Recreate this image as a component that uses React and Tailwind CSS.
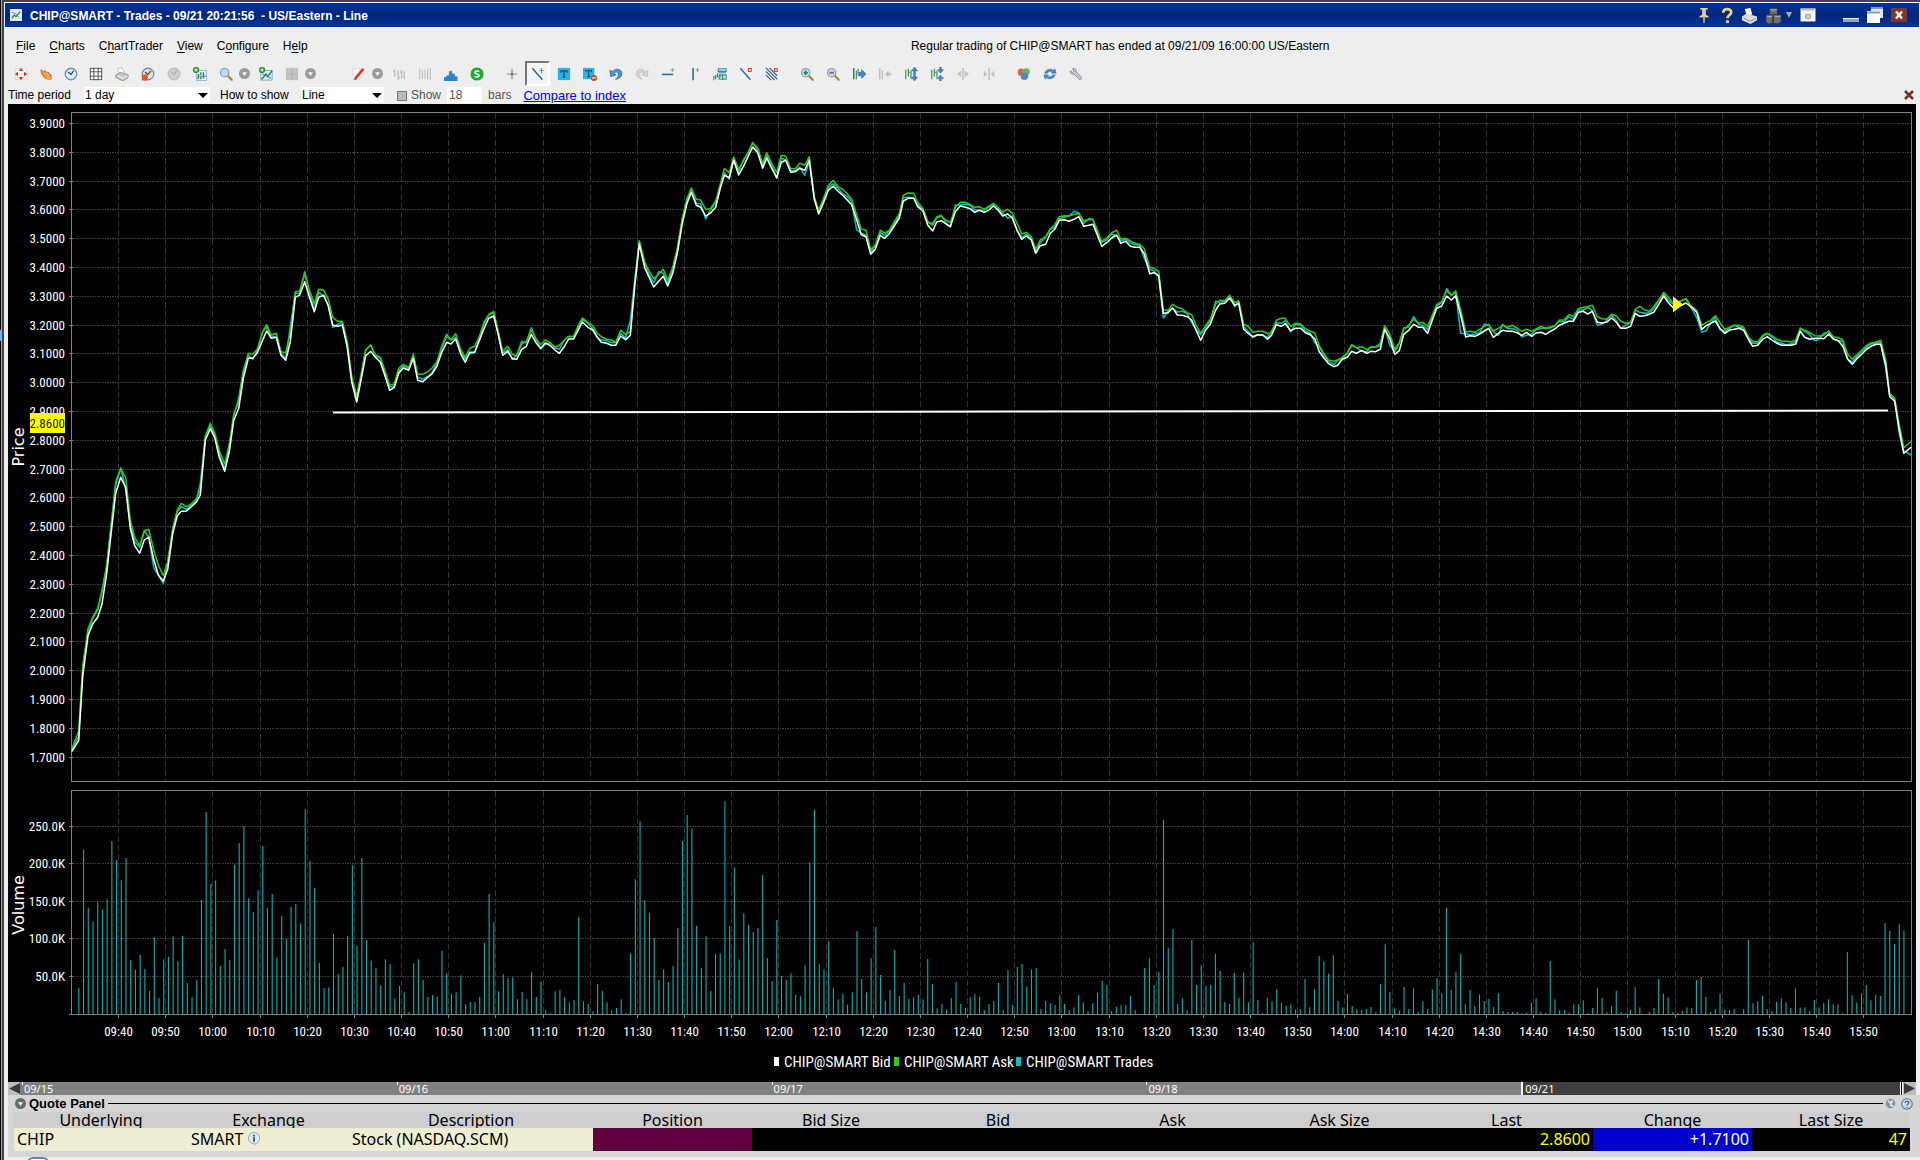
import { useState } from "react";

// price lines, one block per stretch of the session
// rows are: x, bid, ask, trades in thirds of a chart unit from (x0, y0)
const TRACES = [
  {
    x0: 0,
    y0: 400,
    rows: [
      [215, 1055, 1048, 1050], [236, 1022, 993, 1010], [248, 830, 800, 800], [264, 707, 686, 700],
      [278, 672, 652, 655], [293, 652, 625, 630], [306, 612, 575, 572], [320, 520, 495, 500],
      [334, 395, 375, 370], [347, 280, 255, 245], [362, 232, 206, 203], [377, 262, 232, 270],
      [391, 385, 360, 375], [404, 437, 412, 425], [419, 460, 437, 442], [433, 420, 392, 392],
      [446, 411, 388, 410], [461, 478, 450, 503], [475, 525, 495, 525], [490, 543, 527, 550],
      [503, 508, 485, 495], [518, 400, 385, 395], [532, 347, 330, 335], [544, 334, 310, 320],
      [559, 334, 320, 328], [574, 320, 312, 316], [589, 307, 296, 302], [601, 285, 270, 250],
      [616, 120, 108, 112], [631, 86, 70, 76], [644, 113, 98, 105], [658, 172, 152, 165],
      [674, 214, 192, 207], [688, 155, 132, 142],
    ],
  },
  {
    x0: 0,
    y0: 100,
    rows: [
      [701, 962, 942, 948], [716, 925, 905, 895], [730, 835, 818, 810], [745, 775, 760, 765],
      [758, 775, 763, 778], [772, 758, 748, 752], [788, 720, 695, 695], [800, 692, 674, 680],
      [814, 715, 705, 708], [829, 712, 700, 712], [843, 766, 755, 760], [857, 781, 758, 775],
      [871, 725, 700, 680], [886, 592, 575, 580], [899, 585, 572, 580], [914, 545, 522, 515],
      [928, 590, 570, 575], [943, 635, 612, 630], [956, 592, 568, 577], [971, 586, 571, 588],
      [985, 618, 598, 615], [998, 675, 652, 682], [1013, 679, 664, 673], [1027, 675, 664, 666],
      [1042, 740, 725, 745], [1055, 845, 828, 842], [1070, 906, 888, 895], [1083, 840, 825, 830],
      [1097, 767, 750, 750], [1112, 754, 734, 736], [1126, 772, 764, 768], [1141, 786, 772, 775],
      [1155, 828, 812, 818], [1169, 871, 856, 862], [1183, 862, 852, 858], [1196, 820, 805, 812],
      [1210, 804, 793, 798], [1226, 811, 803, 806], [1240, 775, 765, 762], [1253, 841, 823, 832],
      [1268, 845, 823, 838], [1282, 833, 816, 830], [1296, 822, 804, 818], [1310, 800, 786, 790],
      [1325, 757, 745, 738], [1340, 727, 710, 703], [1353, 732, 719, 721], [1367, 717, 701, 712],
      [1382, 762, 748, 755],
    ],
  },
  {
    x0: 460,
    y0: 120,
    rows: [
      [16, 727, 712, 718], [29, 697, 685, 702], [44, 697, 679, 698], [58, 662, 650, 652],
      [71, 628, 615, 608], [86, 595, 583, 585], [101, 588, 574, 578], [115, 645, 635, 640],
      [128, 706, 694, 700], [143, 694, 679, 688], [157, 716, 703, 718], [170, 718, 708, 706],
      [185, 688, 672, 664], [199, 679, 664, 668], [214, 643, 630, 623], [228, 668, 656, 658],
      [242, 685, 674, 688], [256, 669, 660, 672], [270, 676, 667, 668], [285, 690, 682, 684],
      [298, 700, 676, 688], [313, 680, 661, 660], [326, 657, 649, 650], [341, 657, 649, 650],
      [355, 630, 616, 622], [367, 606, 594, 598], [384, 622, 608, 610], [398, 630, 617, 626],
      [412, 652, 640, 652], [424, 667, 650, 660], [440, 670, 658, 662], [454, 676, 660, 668],
      [467, 676, 667, 668], [482, 648, 631, 640], [497, 659, 643, 655], [511, 646, 635, 600],
      [524, 500, 490, 480], [538, 372, 362, 365], [554, 443, 425, 432], [568, 473, 455, 465],
      [581, 501, 476, 488], [596, 484, 463, 455], [610, 469, 448, 460], [623, 498, 480, 490],
      [638, 460, 442, 448], [652, 400, 385, 390], [667, 310, 295, 298], [681, 250, 240, 235],
      [694, 217, 204, 207], [709, 256, 238, 250], [722, 262, 241, 252], [737, 288, 268, 297],
      [751, 280, 266, 270], [767, 262, 244, 248], [781, 205, 192, 196], [793, 166, 146, 158],
      [808, 173, 158, 178], [821, 121, 111, 115], [836, 165, 148, 156], [850, 140, 125, 120],
      [864, 110, 98, 100], [878, 81, 70, 67], [893, 98, 84, 92], [908, 145, 130, 138],
      [920, 114, 98, 106], [935, 145, 130, 138], [950, 173, 158, 175], [964, 127, 106, 115],
      [977, 121, 109, 120], [992, 157, 146, 152], [1006, 155, 146, 152], [1019, 145, 130, 142],
      [1034, 151, 136, 166], [1048, 121, 110, 125], [1063, 238, 230, 235], [1076, 282, 270, 275],
      [1090, 250, 236, 243], [1105, 211, 197, 203], [1120, 198, 181, 191], [1134, 214, 200, 205],
      [1148, 226, 208, 222], [1162, 240, 222, 230], [1175, 254, 237, 245], [1190, 300, 285, 330],
      [1204, 344, 328, 340], [1218, 350, 330, 346], [1232, 403, 390, 396], [1246, 388, 374, 378],
      [1261, 346, 331, 338], [1274, 355, 339, 347], [1288, 341, 331, 333], [1303, 318, 305, 310],
      [1318, 294, 281, 287], [1330, 243, 226, 233], [1345, 235, 219, 232], [1361, 235, 220, 233],
      [1373, 260, 247, 254], [1389, 273, 266, 270], [1403, 315, 304, 308], [1418, 333, 316, 310],
      [1430, 306, 294, 291],
    ],
  },
  {
    x0: 940,
    y0: 160,
    rows: [
      [4, 182, 169, 166], [18, 192, 180, 188], [31, 200, 188, 202], [46, 155, 143, 136],
      [61, 138, 127, 135], [77, 142, 127, 132], [91, 146, 134, 136], [104, 157, 142, 149],
      [118, 150, 140, 152], [132, 157, 148, 150], [146, 151, 139, 142], [160, 138, 130, 134],
      [174, 150, 142, 146], [188, 168, 156, 160], [203, 162, 148, 175], [217, 174, 159, 168],
      [231, 210, 190, 212], [245, 238, 222, 232], [259, 228, 217, 223], [274, 240, 230, 235],
      [287, 280, 268, 275], [301, 257, 240, 248], [317, 253, 230, 232], [331, 220, 206, 208],
      [344, 208, 194, 202], [358, 181, 170, 176], [373, 179, 167, 172], [387, 184, 168, 168],
      [402, 178, 163, 154], [416, 170, 161, 158], [431, 199, 182, 190], [446, 196, 179, 176],
      [459, 193, 179, 178], [472, 225, 210, 218], [485, 259, 244, 247], [500, 248, 234, 240],
      [515, 234, 218, 222], [530, 225, 211, 228], [542, 250, 237, 242], [557, 244, 235, 238],
      [571, 259, 243, 250], [585, 262, 250, 254], [599, 262, 253, 256], [613, 281, 266, 295],
      [629, 341, 322, 328], [642, 338, 325, 332], [656, 347, 334, 350], [670, 460, 450, 474],
      [684, 458, 451, 454], [698, 444, 433, 444], [712, 465, 442, 456], [727, 466, 447, 454],
      [741, 470, 458, 460], [755, 480, 464, 488], [768, 510, 495, 508], [782, 541, 520, 524],
      [797, 510, 496, 502], [811, 493, 478, 482], [827, 450, 432, 424], [839, 432, 421, 427],
      [854, 430, 422, 424], [869, 414, 408, 406], [884, 436, 428, 440], [896, 430, 422, 424],
      [911, 508, 493, 500], [926, 521, 500, 516], [938, 530, 517, 533], [953, 524, 514, 524],
      [968, 525, 514, 526], [983, 538, 521, 532], [995, 525, 518, 512], [1009, 494, 481, 488],
      [1024, 499, 475, 490], [1036, 491, 475, 482], [1052, 512, 499, 516], [1066, 505, 490, 493],
      [1082, 505, 492, 496], [1096, 518, 506, 512], [1111, 524, 514, 520], [1124, 536, 518, 548],
      [1138, 575, 558, 560], [1150, 592, 578, 584], [1165, 610, 600, 603], [1181, 620, 604, 614],
      [1193, 616, 600, 600], [1207, 598, 592, 598], [1222, 592, 578, 580], [1235, 574, 556, 554],
      [1249, 580, 563, 562], [1265, 571, 560, 574], [1280, 580, 569, 576], [1292, 574, 562, 560],
      [1306, 575, 561, 562], [1321, 568, 558, 550], [1334, 508, 497, 500], [1349, 535, 522, 555],
      [1364, 583, 568, 576], [1378, 572, 548, 550], [1391, 523, 508, 504], [1405, 512, 497, 502],
      [1421, 493, 478, 470], [1436, 502, 490, 494],
    ],
  },
  {
    x0: 1420,
    y0: 260,
    rows: [
      [8, 202, 187, 196], [23, 220, 199, 208], [37, 180, 165, 170], [50, 145, 134, 138],
      [65, 138, 125, 128], [80, 108, 92, 86], [94, 120, 106, 106], [107, 107, 92, 98],
      [122, 165, 150, 220], [137, 231, 216, 221], [150, 227, 214, 224], [165, 229, 217, 222],
      [179, 222, 208, 218], [193, 213, 200, 193], [206, 205, 193, 196], [220, 232, 213, 215],
      [235, 220, 205, 226], [248, 211, 196, 193], [263, 214, 202, 206], [277, 214, 196, 206],
      [291, 218, 204, 210], [305, 226, 214, 230], [320, 217, 208, 226], [335, 229, 214, 222],
      [348, 219, 207, 210], [363, 217, 199, 205], [377, 223, 206, 204], [391, 214, 200, 204],
      [404, 207, 198, 198], [418, 196, 180, 184], [432, 190, 180, 186], [446, 184, 164, 170],
      [460, 184, 169, 178], [475, 157, 146, 150], [490, 154, 142, 150], [503, 162, 140, 142],
      [517, 154, 136, 152], [532, 187, 170, 196], [546, 189, 176, 192], [560, 187, 178, 182],
      [575, 174, 163, 166], [589, 187, 168, 182], [602, 205, 184, 205], [617, 205, 190, 196],
      [632, 199, 187, 188], [646, 160, 148, 150], [659, 169, 139, 157], [674, 167, 150, 160],
      [688, 163, 154, 158], [701, 157, 140, 146], [716, 133, 120, 122], [731, 108, 97, 102],
      [745, 128, 112, 122], [760, 143, 130, 132], [775, 140, 126, 128], [798, 129, 116, 116],
      [813, 141, 137, 142], [830, 157, 151, 172], [845, 208, 196, 216], [859, 197, 188, 212],
      [872, 190, 181, 188], [886, 183, 167, 172], [900, 205, 188, 210], [914, 220, 208, 214],
      [929, 210, 202, 204], [942, 208, 196, 196], [957, 205, 196, 202], [971, 211, 202, 204],
      [986, 240, 232, 236], [998, 259, 244, 250], [1013, 256, 246, 250], [1028, 238, 226, 230],
      [1042, 230, 220, 220], [1057, 241, 228, 232], [1071, 250, 238, 246], [1085, 256, 243, 250],
      [1099, 256, 244, 254], [1112, 256, 246, 252], [1127, 253, 240, 246], [1141, 214, 204, 206],
      [1154, 232, 211, 214], [1169, 238, 218, 224], [1184, 235, 227, 242], [1198, 235, 228, 238],
      [1211, 236, 226, 220], [1226, 222, 213, 216], [1240, 237, 230, 236], [1255, 242, 233, 242],
      [1268, 258, 239, 244], [1283, 298, 282, 298], [1297, 313, 298, 306], [1312, 295, 283, 288],
      [1326, 282, 270, 274], [1340, 267, 256, 260], [1353, 259, 249, 252], [1368, 253, 247, 248],
      [1382, 253, 241, 248], [1397, 315, 300, 325], [1409, 410, 400, 405], [1424, 424, 415, 418],
      [1437, 505, 490, 515], [1451, 580, 563, 572], [1474, 561, 544, 585],
    ],
  },
];

// top of every one-minute volume bar, in thirds of a unit below y = 780 (703 is the base line)
const VOLUME_BASE = 703;
const VOLUMES = [
  624, 208, 384, 424, 367, 388, 358, 183, 240, 301,
  234, 541, 569, 525, 567, 633, 472, 654, 538, 530,
  469, 544, 467, 609, 651, 600, 360, 96, 311, 301,
  558, 507, 540, 254, 189, 138, 355, 396, 331, 198,
  384, 342, 534, 408, 477, 381, 372, 430, 88, 243,
  323, 549, 624, 622, 462, 582, 561, 468, 255, 498,
  234, 480, 542, 564, 616, 538, 552, 655, 618, 637,
  696, 550, 538, 600, 651, 645, 650, 513, 580, 642,
  637, 586, 673, 666, 666, 651, 489, 342, 427, 634,
  583, 594, 592, 658, 636, 657, 576, 651, 604, 690,
  700, 634, 630, 652, 667, 660, 411, 664, 672, 694,
  612, 633, 667, 690, 684, 658, 700, 520, 298, 124,
  361, 399, 474, 600, 568, 606, 558, 444, 183, 105,
  146, 438, 564, 469, 633, 522, 520, 63, 438, 262,
  538, 400, 435, 456, 444, 286, 534, 603, 420, 588,
  600, 580, 645, 649, 556, 247, 90, 553, 568, 484,
  624, 658, 642, 674, 637, 453, 597, 637, 534, 441,
  585, 662, 630, 510, 648, 609, 657, 652, 645, 658,
  537, 612, 685, 672, 688, 654, 606, 672, 684, 652,
  642, 651, 690, 672, 663, 609, 690, 570, 675, 561,
  552, 620, 568, 564, 687, 663, 670, 675, 645, 672,
  690, 682, 645, 667, 694, 670, 639, 603, 615, 692,
  681, 675, 675, 648, 690, 703, 564, 535, 615, 576,
  120, 504, 447, 672, 655, 690, 480, 615, 556, 618,
  615, 522, 573, 666, 672, 579, 654, 578, 667, 487,
  660, 700, 654, 664, 628, 668, 678, 673, 688, 688,
  597, 682, 628, 528, 544, 581, 526, 663, 682, 642,
  678, 688, 690, 687, 681, 697, 612, 493, 636, 685,
  691, 621, 687, 625, 696, 664, 687, 628, 594, 640,
  384, 630, 576, 522, 673, 630, 678, 643, 663, 657,
  681, 640, 693, 696, 696, 696, 700, 698, 668, 655,
  696, 699, 543, 658, 690, 690, 698, 673, 673, 661,
  699, 684, 625, 654, 697, 679, 633, 696, 700, 690,
  622, 682, 703, 696, 684, 597, 642, 652, 696, 699,
  693, 682, 684, 600, 591, 651, 696, 687, 640, 690,
  690, 687, 703, 687, 480, 669, 664, 647, 687, 693,
  666, 655, 667, 684, 625, 683, 682, 693, 660, 682,
  669, 658, 673, 673, 700, 516, 646, 667, 640, 615,
  661, 645, 648, 430, 453, 492, 433, 451,
];

const MINUTE = 4.716;

const linePoints = (col) =>
  TRACES.flatMap(({ x0, y0, rows }) =>
    rows.map((row) => `${(x0 + row[0] / 3).toFixed(1)},${(y0 + row[col] / 3).toFixed(1)}`)
  ).join(" ");

const priceTicks = Array.from({ length: 23 }, (_, i) => ({
  label: (3.9 - i * 0.1).toFixed(4),
  y: Math.round(123 + i * 28.8) + 0.5,
}));

const volumeTicks = [
  { label: "250.0K", y: 826.5 },
  { label: "200.0K", y: 863.5 },
  { label: "150.0K", y: 901.5 },
  { label: "100.0K", y: 938.5 },
  { label: "50.0K", y: 976.5 },
];

const timeTicks = Array.from({ length: 38 }, (_, i) => {
  const minutes = 9 * 60 + 40 + i * 10;
  const hh = String(Math.floor(minutes / 60)).padStart(2, "0");
  const mm = String(minutes % 60).padStart(2, "0");
  return { label: `${hh}:${mm}`, x: Math.round(118 + i * 47.17) + 0.5 };
});

function Chart() {
  return (
    <svg
      viewBox="8 104 1908 978"
      className="block h-auto w-full bg-black font-['Liberation_Sans_Narrow','Roboto_Condensed','Liberation_Sans',sans-serif]"
      role="img"
      aria-label="CHIP@SMART price and volume"
    >
      {/* grid */}
      <g stroke="#404040" strokeDasharray="2 1 1 1">
        {[...priceTicks, ...volumeTicks].map(({ y }) => (
          <line key={y} x1="72" x2="1911" y1={y} y2={y} />
        ))}
      </g>
      <g stroke="#323232" strokeDasharray="6 3">
        {timeTicks.map(({ x }) => (
          <g key={x}>
            <line x1={x} x2={x} y1="113" y2="782" />
            <line x1={x} x2={x} y1="791" y2="1014" />
          </g>
        ))}
      </g>

      {/* plot frames and axis ticks */}
      <g fill="none" stroke="#808080">
        <rect x="71.5" y="112.5" width="1840" height="669" />
        <rect x="71.5" y="790.5" width="1840" height="224" />
        {[...priceTicks, ...volumeTicks, { y: 1014.5 }].map(({ y }) => (
          <line key={y} x1="69" x2="73" y1={y} y2={y} />
        ))}
        {timeTicks.map(({ x }) => (
          <line key={x} x1={x} x2={x} y1="1014" y2="1018" />
        ))}
      </g>

      {/* volume bars */}
      <g fill="#00b4b4">
        <rect x="71" y="910" width="1" height="104" />
        {VOLUMES.map((top, i) => (
          <rect
            key={i}
            x={(78.3 + i * MINUTE).toFixed(2)}
            y={780 + top / 3}
            width="1.1"
            height={(VOLUME_BASE - top) / 3}
          />
        ))}
      </g>

      {/* price lines */}
      <g fill="none" strokeWidth="1.5" strokeLinejoin="round">
        <polyline points={linePoints(3)} stroke="#00c0c8" />
        <polyline points={linePoints(2)} stroke="#33cc00" />
        <polyline points={linePoints(1)} stroke="#ffffff" />
      </g>
      <line x1="333" y1="412.5" x2="1888" y2="410.5" stroke="#fff" strokeWidth="2" />
      <path d="M1673 296.5v16l10-8z" fill="#ff0" />

      {/* axis labels */}
      <g fill="#fff" fontSize="13" textAnchor="end">
        {[...priceTicks, ...volumeTicks].map(({ label, y }) => (
          <text key={label} x="65" y={y + 4}>
            {label}
          </text>
        ))}
        <rect x="30" y="413" width="35" height="20" fill="#ff0" />
        <text x="65" y="428" fill="#222">
          2.8600
        </text>
      </g>
      <g fill="#fff" fontSize="13" textAnchor="middle">
        {timeTicks.map(({ label, x }) => (
          <text key={label} x={x} y="1036">
            {label}
          </text>
        ))}
      </g>
      <g fill="#fff" fontSize="16" textAnchor="middle" className="font-['DejaVu_Sans',sans-serif]">
        <text transform="translate(24 447) rotate(-90)">Price</text>
        <text transform="translate(24 905) rotate(-90)">Volume</text>
      </g>

      {/* legend */}
      <g fontSize="15" fill="#fff">
        <rect x="774" y="1057" width="5" height="9" />
        <text x="784" y="1067">CHIP@SMART Bid</text>
        <rect x="894" y="1057" width="5" height="9" fill="#33cc00" />
        <text x="904" y="1067">CHIP@SMART Ask</text>
        <rect x="1016" y="1057" width="5" height="9" fill="#00c0c8" />
        <text x="1026" y="1067">CHIP@SMART Trades</text>
      </g>
    </svg>
  );
}

const Clock = ({ face = "#d5ecf8", rim = "#6d93ad", hand = "#333" }) => (
  <>
    <circle cx="8" cy="8" r="6.6" fill={face} stroke={rim} strokeWidth="1.5" />
    <path d="M4.5 5.5 8 8.5l3-4" fill="none" stroke={hand} strokeWidth="1.2" />
  </>
);

const Plus = () => (
  <>
    <circle cx="3.5" cy="3.5" r="3.5" fill="#1f8f1f" />
    <path d="M1.5 3.5h4M3.5 1.5v4" stroke="#fff" strokeWidth="1.2" />
  </>
);

const Lens = ({ children }) => (
  <>
    <path d="m9.5 9.5 5 5" stroke="#b08040" strokeWidth="2.6" strokeLinecap="round" />
    <circle cx="6.5" cy="6.5" r="4.8" fill="#b5dbf5" stroke="#8d9aa5" strokeWidth="1.3" />
    {children}
  </>
);

const BarsPlot = () => (
  <path d="M2 3v11M5 2v9M5 6h2M8 4v10" stroke="#3f9a55" strokeWidth="1.4" fill="none" />
);

const icons = {
  move: (
    <>
      <rect x="1.5" y="1.5" width="13" height="13" fill="#f8f4f4" stroke="#cfcfcf" strokeDasharray="2 1" />
      <path d="M8 1 5.5 4.5h5zM8 15l-2.5-3.500h5zM1 8l3.500-2.500v5zM15 8l-3.500-2.500v5z" fill="#e22a1c" />
    </>
  ),
  hand: (
    <>
      <path d="M2 3l4 3 0-2 3 2 2 0 1 2 2 1 0 5-4 0-4-2-3-4z" fill="#f08a24" stroke="#b8560f" strokeWidth=".7" />
      <path d="M5 6l4 5M8 6l3 4M9 12l4 1" stroke="#ffd9a0" fill="none" />
    </>
  ),
  clock: <Clock />,
  grid: (
    <>
      <rect x="1.5" y="1.5" width="13" height="13" fill="#fff" stroke="#444" />
      <path d="M5.5 1v14M10.5 1v14M1 5.500h14M1 10.500h14" stroke="#444" />
    </>
  ),
  printer: (
    <>
      <path d="M3 2l5-1 3 6-6 1z" fill="#fff" stroke="#aaa" strokeWidth=".7" />
      <path d="M1 9l5-3 9 3v3l-6 4-8-4z" fill="#c4c8cc" stroke="#777" strokeWidth=".8" />
      <path d="M3 10l6 3 5-3" stroke="#fff" fill="none" />
    </>
  ),
  clockEdit: (
    <>
      <Clock />
      <path d="M1 9l6-1 1 4-2 4-5-1z" fill="#e0562b" />
      <path d="M7 11l6-7" stroke="#f3a23a" strokeWidth="1.6" />
    </>
  ),
  clockOff: <Clock face="#cfcfcf" rim="#c0c0c0" hand="#aaa" />,
  addList: (
    <>
      <path d="M4 4h11.500v11.500H4z" fill="#eaf2f8" stroke="#7aa0c0" strokeWidth=".8" />
      <path d="M6 8v6M9 6v3M9 11v3M12 6v7" stroke="#2b7a4d" strokeWidth="1.5" />
      <path d="M6 10.500h9" stroke="#3973ac" />
      <Plus />
    </>
  ),
  search: <Lens />,
  addChart: (
    <>
      <path d="M2 4h13v11H2z" fill="#dcecf5" stroke="#6a90ae" strokeWidth=".8" />
      <path d="M3 14l5-6 2 3 5-7" fill="none" stroke="#2a8a48" strokeWidth="1.6" />
      <path d="M4 8l10 5" stroke="#3b6fc0" />
      <Plus />
    </>
  ),
  layoutOff: (
    <>
      <rect x="1" y="1" width="14" height="14" fill="#c4c4c4" />
      <path d="M8 1v14M1 8h14" stroke="#b2b2b2" />
    </>
  ),
  pencil: (
    <>
      <path d="M1 2h8v12H2z" fill="#fbfbfb" stroke="#ccc" strokeWidth=".7" />
      <path d="M4 13 13 2" stroke="#e0301e" strokeWidth="2.8" />
      <path d="M2.5 15l2.8-1.3-1.8-1.6z" fill="#333" />
    </>
  ),
  barsOff: (
    <path d="M3 2v9M1 5h2M7 4v11M7 12h2M11 3v10M9 6h2M14 5v9" stroke="#bbb" strokeWidth="1.5" fill="none" />
  ),
  linesOff: <path d="M2 2v12M5 4v10M8 3v11M11 2v12M14 1v14" stroke="#bbb" strokeWidth="1.2" />,
  histogram: (
    <path d="M0 16v-4h3v4M3 16v-6h3v6M6 16V5h3v11M9 16V8h3v8M12 16v-5h3v5" fill="#2f8fe0" stroke="#2569b0" strokeWidth=".6" />
  ),
  money: (
    <>
      <circle cx="8" cy="8" r="7.5" fill="#1eab33" />
      <path d="M10.5 5.5C9 4 5.5 4.3 5.5 6.3s5 1.2 5 3.400-3.500 2.300-5.200.8" fill="none" stroke="#fff" strokeWidth="1.7" />
    </>
  ),
  cross: (
    <>
      <path d="M8 2v12M2 8h12" stroke="#8a8a8a" strokeWidth="1.4" />
      <circle cx="8" cy="8" r="1.8" fill="#777" />
    </>
  ),
  trend: (
    <>
      <path d="M1.500 1.500 13 14.500" stroke="#2e6598" strokeWidth="1.8" />
      <path d="M12 1v6M9.500 4h5" stroke="#6c93b5" strokeWidth="1.3" />
    </>
  ),
  text: (
    <>
      <rect x="1" y="1" width="14" height="14" fill="#27b4ea" />
      <path d="M4.5 6.500V4.500h7v2M8 4.500v7M6.500 11.500h3" stroke="#174a6a" strokeWidth="1.4" fill="none" />
    </>
  ),
  textRemove: (
    <>
      <rect x="0" y="1" width="13" height="13" fill="#27b4ea" />
      <path d="M3.5 6V4h6v2M6.500 4v7M5 11h3" stroke="#174a6a" strokeWidth="1.4" fill="none" />
      <circle cx="12.500" cy="12.500" r="3.500" fill="#e03c22" />
      <path d="M10.500 12.500h4" stroke="#fff" strokeWidth="1.3" />
    </>
  ),
  undo: (
    <path d="M1 4l1 7 6-2-2-1.500c2-3 5-2 4.500 2-.3 2-1.500 3.500-3 4.500 5-.5 8-4 7-8-1-4-7-5-10-1z" fill="#4a94d8" stroke="#21609c" strokeWidth=".8" />
  ),
  redoOff: (
    <path d="M15 4l-1 7-6-2 2-1.500c-2-3-5-2-4.500 2 .3 2 1.500 3.500 3 4.500-5-.5-8-4-7-8 1-4 7-5 10-1z" fill="#d3d3d3" stroke="#bcbcbc" strokeWidth=".8" />
  ),
  hLine: (
    <>
      <path d="M1 8.500h13" stroke="#2e6a90" strokeWidth="1.8" />
      <path d="M11 3.500h4M13 1.500v4" stroke="#69b069" strokeWidth="1.2" />
    </>
  ),
  vLine: (
    <>
      <path d="M7 1v14" stroke="#2e6a90" strokeWidth="1.8" />
      <path d="M10 3.500h4M12 1.500v4" stroke="#69b069" strokeWidth="1.2" />
    </>
  ),
  study: (
    <>
      <path d="M6 2h9v3H6zM6 6.500h9M7 9h8v5H7z" fill="#bfe3ee" stroke="#2a8ea8" strokeWidth="1.2" />
      <path d="M1 15v-5M3 14V9M5 12V7M8 12V9M11 14v-5" stroke="#2f9140" strokeWidth="1.3" />
    </>
  ),
  lineRemove: (
    <>
      <path d="M1.500 1.500 13 14.500" stroke="#2e6598" strokeWidth="1.6" />
      <rect x="10.800" y="1.800" width="3.200" height="3.200" fill="#fff" stroke="#e0452c" strokeWidth="1.3" />
    </>
  ),
  linesRemove: (
    <>
      <path d="M1 1 14 14M1 5l10 10M1 9l6 6M5 1l9 9" stroke="#3a6a94" strokeWidth="1.5" />
      <rect x="10.800" y="1.800" width="3.200" height="3.200" fill="#fff" stroke="#e0452c" strokeWidth="1.3" />
    </>
  ),
  zoomIn: (
    <Lens>
      <path d="M4 6.500h5M6.500 4v5" stroke="#1f8f1f" strokeWidth="1.8" />
    </Lens>
  ),
  zoomOut: (
    <Lens>
      <path d="M4 6.500h5" stroke="#e03c22" strokeWidth="2" />
    </Lens>
  ),
  stretchRight: (
    <>
      <path d="M2 1v13" stroke="#2a62b8" strokeWidth="1.6" />
      <path d="M5 4v10M7 2v8" stroke="#3fa34f" strokeWidth="1.4" />
      <path d="M8 6h3V3l5 5-5 5v-3H8z" fill="#3f86dc" stroke="#2457a0" strokeWidth=".6" />
    </>
  ),
  shrinkOff: (
    <>
      <path d="M2 1v13M5 4v10" stroke="#bdbdbd" strokeWidth="1.5" />
      <path d="M15 6.500h-3V4L8 8l4 4V9.500h3z" fill="#bdbdbd" />
    </>
  ),
  stretchUp: (
    <>
      <BarsPlot />
      <path d="M12 0 8.500 4.500H11v7H8.500L12 16l3.500-4.500H13v-7h2.500z" fill="#3f86dc" stroke="#2457a0" strokeWidth=".5" />
    </>
  ),
  squeeze: (
    <>
      <BarsPlot />
      <path d="M12 7 8.500 3H11V0h2v3h2.500zM12 9l-3.500 4H11v3h2v-3h2.500z" fill="#3f86dc" stroke="#2457a0" strokeWidth=".5" />
    </>
  ),
  spreadOff: (
    <>
      <path d="M8 1v14" stroke="#bdbdbd" strokeWidth="1.600" />
      <path d="M6 4v8L1 8zM10 4v8l5-4z" fill="#c4c4c4" />
    </>
  ),
  joinOff: (
    <>
      <path d="M8 1v14" stroke="#bdbdbd" strokeWidth="1.6" />
      <path d="M2 4v8l4-4zM14 4v8l-4-4z" fill="#c4c4c4" />
    </>
  ),
  colors: (
    <>
      <circle cx="5" cy="6" r="4.2" fill="#e2604a" />
      <circle cx="10.500" cy="5.500" r="4.2" fill="#67b85b" />
      <circle cx="8.500" cy="10.500" r="4.3" fill="#4c8bc8" />
    </>
  ),
  refresh: (
    <path d="M2 7c1-4 7-6 10-3l1.500-2L15 7h-5.500l1.500-1.500C9 4 6 5 5 7zM14 9c-1 4-7 6-10 3l-1.500 2L1 9h5.500L5 10.500C7 12 10 11 11 9z" fill="#3c8ad0" stroke="#2a67a4" strokeWidth=".6" />
  ),
  wrench: (
    <path d="M1.500 4.500 4 6.500l2-2L4 2c2.500-1 5 1 4.200 3.500l5.800 6c1.500 2-1 4-2.700 2.300L6 8C3.500 9 1 7 1.500 4.500z" fill="#c3cad2" stroke="#6e7b88" strokeWidth=".9" />
  ),
  dropdown: (
    <>
      <circle cx="8" cy="8" r="8" fill="#9a9a9a" />
      <path d="M4.5 6h7L8 11.500z" fill="#fff" />
    </>
  ),
};

function Icon({ name, className = "h-4 w-4" }) {
  return (
    <svg viewBox="0 0 16 16" className={className} aria-hidden="true">
      {icons[name]}
    </svg>
  );
}

const toolGroups = [
  { className: "", tight: true, tools: ["move", "hand", "clock"] },
  {
    className: "",
    tools: [
      "grid", "printer", "clockEdit", "clockOff", "addList", "search", "dropdown",
      "addChart", "layoutOff", "dropdown",
    ],
  },
  { className: "ml-7", tools: ["pencil", "dropdown", "barsOff", "linesOff", "histogram", "money"] },
  {
    className: "ml-[10px]",
    tools: [
      "cross", "trend", "text", "textRemove", "undo", "redoOff", "hLine", "vLine",
      "study", "lineRemove", "linesRemove",
    ],
  },
  {
    className: "ml-[10px]",
    tools: [
      "zoomIn", "zoomOut", "stretchRight", "shrinkOff", "stretchUp", "squeeze", "spreadOff", "joinOff",
    ],
  },
  { className: "ml-[10px]", tools: ["colors", "refresh", "wrench"] },
];

function Toolbar() {
  const [active, setActive] = useState("trend");

  return (
    <div className="flex h-[27px] items-center">
      {toolGroups.map((group, g) => (
        <div key={g} className={`flex items-center ${group.tight ? "" : "gap-px"} ${group.className}`}>
          {group.tools.map((tool, i) => {
            if (tool === "dropdown") {
              return (
                <button key={i} aria-label="More" className="flex w-[13px]">
                  <Icon name={tool} className="h-[11px] w-[11px]" />
                </button>
              );
            }
            const pressed = tool === active;
            return (
              <button
                key={i}
                aria-label={tool}
                aria-pressed={pressed}
                onClick={() => setActive(tool)}
                className={`flex h-[25px] w-[25px] items-center justify-center ${
                  pressed ? "border-2 border-t-[#777] border-l-[#777] border-r-white border-b-white bg-[#f4f4f4]" : ""
                }`}
              >
                <Icon name={tool} className="h-[14px] w-[14px]" />
              </button>
            );
          })}
        </div>
      ))}
    </div>
  );
}

function TitleBar() {
  return (
    <div className="mx-px flex h-6 items-center bg-gradient-to-b from-[#0033a0] via-[#00277c] to-[#0034a0] pl-[5px] pr-3 text-white">
      <svg viewBox="0 0 14 14" className="h-3 w-3" aria-hidden="true">
        <rect width="14" height="14" rx="1" fill="#e4ecf4" />
        <path d="M2 11l3-4 2 2 5-6" fill="none" stroke="#2b8f48" strokeWidth="1.6" />
        <path d="M2 4l4 1 5 5" fill="none" stroke="#4177b8" />
      </svg>
      <h1 className="ml-2 whitespace-pre pt-px text-xs font-bold">
        {"CHIP@SMART - Trades - 09/21 20:21:56  - US/Eastern - Line"}
      </h1>
      <div className="ml-auto flex items-center">
        <button aria-label="Pin" className="w-4">
          <svg viewBox="0 0 16 18" className="h-[17px] w-4">
            <path d="M4 1h8v2h-2v5l3 2v1H3v-1l3-2V3H4z" fill="#dccb94" />
            <path d="M8 11v6" stroke="#dccb94" strokeWidth="1.5" />
          </svg>
        </button>
        <button aria-label="Help" className="ml-[7px] w-4">
          <svg viewBox="0 0 16 18" className="h-[17px] w-4">
            <path d="M4 6c0-5 8.500-5 8.500-.5 0 3-4 3-4 6.500" fill="none" stroke="#e3d08c" strokeWidth="3" />
            <rect x="7" y="14" width="3" height="3" fill="#e3d08c" />
          </svg>
        </button>
        <button aria-label="Print" className="ml-[6px] w-[17px]">
          <svg viewBox="0 0 18 18" className="h-[17px] w-[17px]">
            <path d="M4 2l6-1 2 7-6 1z" fill="#fff" />
            <path d="M1 10l5-3 11 3v4l-7 4-9-4z" fill="#dcdcdc" />
            <path d="M3 12l7 3 6-3" stroke="#888" fill="none" />
          </svg>
        </button>
        <button aria-label="Link windows" className="ml-[7px] flex w-[27px] items-center gap-1">
          <svg viewBox="0 0 18 18" className="h-[17px] w-[17px]">
            <path d="M5 2l4-1 4 1v6H5zM1 9l4-1 3 1v8l-4 1-3-2zM9 9l4-1 4 1v7l-4 2-4-1z" fill="#6d6d6d" stroke="#333" strokeWidth=".7" />
            <path d="M5.500 2.500 9 3.500l3.500-1M2 9.500l2.500.8L8 9.500M10 9.500l3 .8 3.500-.8" stroke="#bbb" fill="none" />
          </svg>
          <svg viewBox="0 0 6 6" className="h-[6px] w-[6px]">
            <path d="M0 0h6L3 6z" fill="#a9a9a9" />
          </svg>
        </button>
        <button aria-label="Dock" className="ml-2 w-4">
          <svg viewBox="0 0 16 14" className="h-[14px] w-4">
            <rect x=".5" y=".5" width="15" height="13" fill="#f4f4ee" />
            <path d="M.5 1.500h15" stroke="#bbb" strokeWidth="2" />
            <rect x="5.500" y="6.500" width="5" height="4" rx="1" fill="#ccc" stroke="#999" />
          </svg>
        </button>
        <button aria-label="Minimize" className="ml-[27px] w-4">
          <svg viewBox="0 0 16 16" className="h-4 w-4">
            <rect y="11" width="16" height="4" fill="#8fa8b8" />
            <path d="M0 11.500h16" stroke="#e6eef2" />
          </svg>
        </button>
        <button aria-label="Restore" className="ml-2 w-4">
          <svg viewBox="0 0 16 16" className="h-4 w-4">
            <path d="M4 0h12v11H4z" fill="#dfe5ea" />
            <path d="M4 1h12" stroke="#8899aa" strokeWidth="2" />
            <path d="M0 4h13v12H0z" fill="#fcfcfa" />
            <path d="M0 5.500h13" stroke="#8a9aa8" strokeWidth="2" />
          </svg>
        </button>
        <button aria-label="Close" className="ml-2 w-4">
          <svg viewBox="0 0 16 14" className="h-[14px] w-4">
            <rect width="16" height="14" fill="#7c3a2c" />
            <path d="m5 3.500 6 7m0-7-6 7" stroke="#f4eeee" strokeWidth="2.5" />
          </svg>
        </button>
      </div>
    </div>
  );
}

const menus = [
  ["", "F", "ile"],
  ["", "C", "harts"],
  ["C", "h", "artTrader"],
  ["", "V", "iew"],
  ["C", "o", "nfigure"],
  ["H", "e", "lp"],
];

function MenuBar() {
  return (
    <div className="grid h-[33px] grid-cols-[47%_1fr] items-center pl-3 pt-1">
      <nav className="flex gap-[14px]">
        {menus.map(([before, key, after]) => (
          <button key={after}>
            {before}
            <span className="underline underline-offset-2">{key}</span>
            {after}
          </button>
        ))}
      </nav>
      <p>Regular trading of CHIP@SMART has ended at 09/21/09 16:00:00 US/Eastern</p>
    </div>
  );
}

function DropSelect({ id, className, options }) {
  return (
    <div className={`relative ${className}`}>
      <select id={id} className="h-4 w-full appearance-none bg-white pl-px leading-4">
        {options.map((option) => (
          <option key={option}>{option}</option>
        ))}
      </select>
      <svg viewBox="0 0 10 5" className="pointer-events-none absolute right-[2px] top-[6px] h-[5px] w-[10px]">
        <path d="M0 0h10L5 5z" />
      </svg>
    </div>
  );
}

function SettingsRow() {
  return (
    <div className="flex h-[17px] items-start leading-[17px]">
      <label htmlFor="period" className="w-[76px]">
        Time period
      </label>
      <DropSelect id="period" className="w-[126px]" options={["1 day", "2 days", "1 week"]} />
      <label htmlFor="mode" className="ml-[10px] w-[71px]">
        How to show
      </label>
      <DropSelect id="mode" className="ml-[10px] w-[83px]" options={["Line", "Bar", "Candlestick"]} />
      <label className="ml-[13px] flex h-[17px] items-center gap-1 text-[#555]">
        <input type="checkbox" className="h-[10px] w-[10px] appearance-none border border-[#777] bg-[#bbb]" />
        Show
      </label>
      <input
        aria-label="Number of bars"
        defaultValue="18"
        className="ml-[6px] h-4 w-[35px] bg-white pl-[2px] text-[#555]"
      />
      <span className="ml-[6px] text-[#555]">bars</span>
      <a href="#compare" className="ml-3 text-[13px] text-[#0000ee] underline">
        Compare to index
      </a>
      <button aria-label="Close chart" className="ml-auto mr-[6px] mt-[3px]">
        <svg viewBox="0 0 10 10" className="h-[10px] w-[10px]">
          <path d="m1 1 8 8m0-8L1 9" stroke="#7a2f24" strokeWidth="2.5" />
        </svg>
      </button>
    </div>
  );
}

function TimeScroller() {
  return (
    <div className="flex h-[13px] bg-[#808080] font-['Noto_Sans',sans-serif] text-[11px] leading-[13px] text-white">
      <button aria-label="Scroll left" className="w-3 bg-[#bdbdbd]">
        <svg viewBox="0 0 12 13" className="h-[13px] w-3">
          <path d="M12 1v11L1 6.500z" fill="#3a3a3a" />
        </svg>
      </button>
      <div className="ml-[2px] flex flex-1">
        {["09/15", "09/16", "09/17", "09/18"].map((day) => (
          <div key={day} className="flex flex-1 gap-px">
            <i className="h-[3px] w-px bg-white" />
            <span>{day}</span>
          </div>
        ))}
        <div className="flex-1 border-l-2 border-white bg-[#404040] pl-[2px]">09/21</div>
      </div>
      <i className="w-[3px] border-x border-white bg-black" />
      <button aria-label="Scroll right" className="w-[13px] bg-[#bdbdbd]">
        <svg viewBox="0 0 13 13" className="h-[13px] w-[13px]">
          <path d="M1 1v11l11-5.500z" fill="#3a3a3a" />
        </svg>
      </button>
    </div>
  );
}

const columns = [
  { title: "Underlying", width: "w-[174px]", cell: "bg-[#eeeed2] text-left" },
  { title: "Exchange", width: "w-[161px]", cell: "bg-[#eeeed2] text-left" },
  { title: "Description", width: "w-[244px]", cell: "bg-[#eeeed2] text-left" },
  { title: "Position", width: "w-[159px]", cell: "bg-[#600040]" },
  { title: "Bid Size", width: "w-[158px]", cell: "bg-black" },
  { title: "Bid", width: "w-[176px]", cell: "bg-black" },
  { title: "Ask", width: "w-[173px]", cell: "bg-black" },
  { title: "Ask Size", width: "w-[161px]", cell: "bg-black" },
  { title: "Last", width: "w-[173px]", cell: "bg-black text-right text-[#ff0]" },
  { title: "Change", width: "w-[159px]", cell: "bg-[#0000d0] text-right text-white" },
  { title: "Last Size", width: "w-[158px]", cell: "bg-black text-right text-[#ff0]" },
];

const quote = ["CHIP", "SMART", "Stock (NASDAQ.SCM)", "", "", "", "", "", "2.8600", "+1.7100", "47"];

function QuotePanel() {
  return (
    <section className="h-[62px] bg-[#d6d6d6]">
      <div className="flex h-[17px] items-center pl-[7px] pr-[7px]">
        <button aria-label="Collapse" className="w-[11px]">
          <svg viewBox="0 0 16 16" className="h-[11px] w-[11px]">
            <circle cx="8" cy="8" r="8" fill="#6a6a6a" />
            <path d="M4.500 6h7L8 11.500z" fill="#fff" />
          </svg>
        </button>
        <h2 className="ml-[3px] text-[13px] font-bold leading-4">Quote Panel</h2>
        <hr className="ml-[3px] flex-1 border-black" />
        <button aria-label="Panel settings" className="ml-[2px]">
          <svg viewBox="0 0 16 16" className="h-[11px] w-[11px]">
            <circle cx="8" cy="8" r="7" fill="#8d949a" />
            <path d="M4 3l3 4 4-3-3 6 5 3" stroke="#e8ecef" strokeWidth="2" fill="none" />
          </svg>
        </button>
        <button aria-label="Panel help" className="ml-[5px]">
          <svg viewBox="0 0 16 16" className="h-3 w-3">
            <circle cx="8" cy="8" r="7" fill="#c4dcec" stroke="#54788f" strokeWidth="1.5" />
            <path d="M5.500 6.500c0-3 5-3 5 0 0 1.500-2.500 1.500-2.500 3.500M8 11.500v1.500" fill="none" stroke="#35566e" strokeWidth="1.5" />
          </svg>
        </button>
      </div>
      <div className="pl-[6px] pr-[10px]">
        <table className="w-full table-fixed border-collapse font-['Noto_Sans',sans-serif] text-base">
          <thead>
            <tr className="bg-[#cecece]">
              {columns.map(({ title, width }) => (
                <th key={title} className={`${width} p-0 font-normal`}>
                  <div className="h-4 overflow-hidden leading-4">{title}</div>
                </th>
              ))}
            </tr>
          </thead>
          <tbody>
            <tr>
              {columns.map(({ title, cell }, i) => (
                <td key={title} className={`h-[23px] whitespace-nowrap px-[3px] py-0 leading-[23px] ${cell}`}>
                  {quote[i]}
                  {title === "Exchange" && (
                    <svg viewBox="0 0 16 16" className="mb-1 ml-1 inline h-[14px] w-[14px]">
                      <circle cx="8" cy="7" r="6.5" fill="#dfe8ee" stroke="#93a3ae" />
                      <path d="M8 13l1 3 3-4" fill="#b9c5cd" />
                      <path d="M8 6v5M8 3v2" stroke="#2a4d80" strokeWidth="2" />
                    </svg>
                  )}
                </td>
              ))}
            </tr>
          </tbody>
        </table>
      </div>
    </section>
  );
}

export default function App() {
  return (
    <div className="relative flex bg-[#eee] font-['Liberation_Sans',Arial,sans-serif] text-xs text-black">
      <div className="w-1 border-l border-r-2 border-l-black border-r-[#444] bg-[#aaa]" />
      <div className="absolute left-0 top-[330px] h-[11px] w-[2px] bg-[#66b0ff]" />
      <div className="min-w-0 flex-1 border-t-2 border-[#444]">
        <div className="h-px bg-white" />
        <TitleBar />
        <MenuBar />
        <div className="pl-1">
          <Toolbar />
          <SettingsRow />
          <div className="pr-1">
            <Chart />
          </div>
          <div className="pr-1">
            <TimeScroller />
          </div>
          <QuotePanel />
          <div className="h-[3px] overflow-hidden pl-[19px]">
            <div className="h-3 w-[22px] rounded-full border-2 border-[#5a86b4] bg-white" />
          </div>
        </div>
      </div>
    </div>
  );
}
